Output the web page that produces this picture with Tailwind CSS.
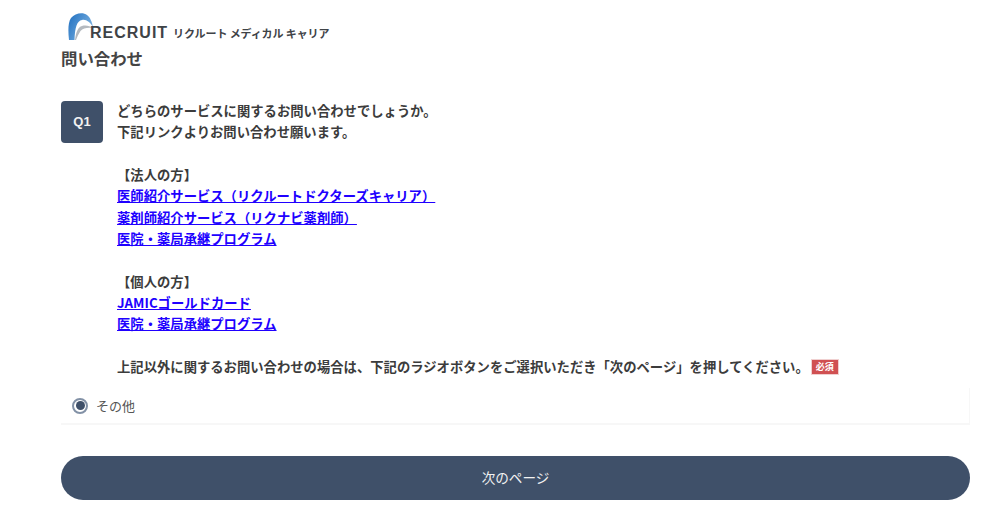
<!DOCTYPE html>
<html lang="ja">
  <head>
    <meta charset="UTF-8" />
    <script src="https://cdn.jsdelivr.net/npm/@tailwindcss/browser@4"></script>
    <title>問い合わせ</title>
  </head>
  <body class="bg-white h-[509px] overflow-hidden font-['Noto_Sans_CJK_JP','Noto_Sans',sans-serif] text-[#3c3c3c]">
    <div class="w-[909px] ml-[61px]">
      <!-- Logo -->
      <div class="h-[46px] pt-[13px] pl-[7px] flex items-start">
        <svg width="26" height="28" viewBox="0 0 26 28" class="shrink-0">
          <defs>
            <linearGradient id="arch" x1="0" y1="0" x2="1" y2="0.6">
              <stop offset="0" stop-color="#1f6fc0" />
              <stop offset="1" stop-color="#7fb4e2" />
            </linearGradient>
          </defs>
          <path d="M7 27 C8 19 10 14 14 13 C18 12 22 13 25 15 C21 14.5 15 14.5 12.5 18 C10.5 21 9 24 8 27 Z" fill="#b4b9bf" />
          <path d="M1 27 C0 18 0 9 3 5 C7 0 15 -1 19 2 C22 4 24 9 25 14 C22 9 18 6 14 7 C9 8 7 14 6.5 27 Z" fill="url(#arch)" />
        </svg>
        <span class="ml-[-4px] mt-[11px] font-['Liberation_Sans',sans-serif] font-bold text-[16px] leading-[18px] tracking-[1px] text-[#3f4347]">RECRUIT</span>
        <span class="ml-[5px] mt-[12px] text-[11px] leading-[17px] font-bold text-[#3f4347] whitespace-pre tracking-[-0.1px]">リクルート メディカル キャリア</span>
      </div>
      <h1 class="text-[16.4px] leading-[24px] font-semibold text-[#444]">問い合わせ</h1>
      <!-- Question -->
      <div class="flex mt-[31px]">
        <div class="w-[42px] h-[42px] shrink-0 rounded-[4px] bg-[#3f5069] text-[#f2f2f2] font-['Liberation_Sans',sans-serif] text-[13px] font-bold flex items-center justify-center">Q1</div>
        <div class="ml-[14px] -mt-[1px] text-[13.33px] leading-[21.33px] font-semibold">
          <p>どちらのサービスに関するお問い合わせでしょうか。</p>
          <p>下記リンクよりお問い合わせ願います。</p>
          <p class="mt-[21.33px]">【法人の方】</p>
          <p><a href="#" class="text-[#2000ff] underline">医師紹介サービス（リクルートドクターズキャリア）</a></p>
          <p><a href="#" class="text-[#2000ff] underline">薬剤師紹介サービス（リクナビ薬剤師）</a></p>
          <p><a href="#" class="text-[#2000ff] underline">医院・薬局承継プログラム</a></p>
          <p class="mt-[21.33px]">【個人の方】</p>
          <p><a href="#" class="text-[#2000ff] underline">JAMICゴールドカード</a></p>
          <p><a href="#" class="text-[#2000ff] underline">医院・薬局承継プログラム</a></p>
          <p class="mt-[21.33px] flex items-center">上記以外に関するお問い合わせの場合は、下記のラジオボタンをご選択いただき「次のページ」を押してください。<span class="ml-[2px] w-[28px] h-[16px] bg-[#d05052] border border-[#f0d0d0] text-white text-[9px] leading-[14px] font-bold text-center">必須</span></p>
        </div>
      </div>
      <!-- Radio -->
      <div class="mt-[11px] h-[37px] border-b-2 border-r border-[#f7f7f7] pl-[11px] flex items-center gap-[8px] text-[13px] text-[#555]">
        <span class="w-[16px] h-[16px] rounded-full border-2 border-[#8291a6] flex items-center justify-center"><span class="w-[9px] h-[9px] rounded-full bg-[#3f5069]"></span></span>
        その他
      </div>
      <!-- Next -->
      <button class="mt-[31px] w-full h-[44px] pb-[3px] rounded-full bg-[#3f5069] text-[#f2f2f2] text-[13.6px]">次のページ</button>
    </div>
  </body>
</html>
